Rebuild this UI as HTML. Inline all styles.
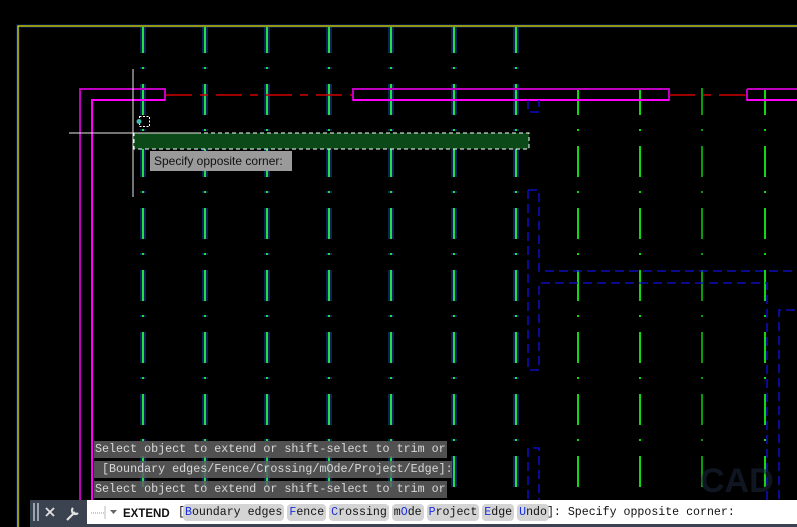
<!DOCTYPE html>
<html><head><meta charset="utf-8"><style>
html,body{margin:0;padding:0;background:#000;width:797px;height:527px;overflow:hidden;position:relative;font-family:"Liberation Sans",sans-serif}
svg{position:absolute;left:0;top:0}
.hist{position:absolute;left:94px;height:17px;background:rgba(95,95,95,0.85);color:#d8d8d8;font:11.7px/17px "Liberation Mono",monospace;white-space:pre;padding:0 1px}
#tip{position:absolute;left:150px;top:151px;width:142px;height:20px;background:#9a9a9a;color:#111;font-size:12px;line-height:20px;padding-left:4px;box-sizing:border-box}
#panel{position:absolute;left:30px;top:500px;width:57px;height:27px;background:#3b4350}
#inp{position:absolute;left:87px;top:500px;width:710px;height:24px;background:#fff}
#bot{position:absolute;left:30px;top:524px;width:767px;height:3px;background:#3b4350}
#cmd{position:absolute;left:178px;top:500px;height:24px;font:11.6px/25px "Liberation Mono",monospace;color:#111;white-space:pre}
.o{background:#d4d4d4;box-shadow:0 0 0 2px #d4d4d4;border-radius:2px}
.o b{color:#1a2ee0;font-weight:normal}
</style></head><body>
<svg width="797" height="527" viewBox="0 0 797 527">
<defs>
<clipPath id="c1"><rect x="0" y="27" width="797" height="500"/></clipPath>
<clipPath id="c2"><rect x="0" y="88" width="797" height="440"/></clipPath>
</defs>
<path d="M18 527V26H797" stroke="#0a2060" stroke-width="4" fill="none" opacity="0.6"/>
<path d="M18 527V26H797" stroke="#e6e600" stroke-width="1.3" fill="none"/>
<g clip-path="url(#c1)" stroke-dasharray="31 14 2 15">
<g stroke="#0d2a70" stroke-width="6" opacity="0.8">
<path d="M143 22V500M205 22V500M267 22V500M329 22V500M391 22V500M454 22V500M516 22V500"/>
</g>
<g stroke="#22e040" stroke-width="2">
<path d="M143 22V500M205 22V500M267 22V500M329 22V500M391 22V500M454 22V500M516 22V500"/>
</g>
</g>
<g clip-path="url(#c2)" stroke-dasharray="31 14 2 15" stroke-width="2">
<path d="M578 22V500M640 22V500M765 22V500" stroke="#12d812"/>
<path d="M702 22V500" stroke="#0a9a0a"/>
</g>
<g fill="none" stroke-width="2">
<path d="M80 527V89H165V100H92V527" stroke="#c000c0"/>
<path d="M92 527V100H165" stroke="#ff00ff"/>
<path d="M353 89H669V100H353Z" stroke="#c000c0"/>
<path d="M353 100H669" stroke="#ff00ff"/>
<path d="M747 89H797M747 89V100H797" stroke="#c000c0"/>
<path d="M747 100H797" stroke="#ff00ff"/>
</g>
<path d="M166 95H352M669 95H747" stroke="#d00000" stroke-width="1.5" stroke-dasharray="26 8 8 8"/>
<g fill="none" stroke="#1010e0" stroke-width="1.3" stroke-dasharray="9 5">
<path d="M528 100V112H539V100"/>
<path d="M528 190H539V271H797M528 190V370H539V283H767V527M779 527V310H797"/>
<path d="M528 527V448H539V527"/>
</g>
<rect x="134" y="133" width="395" height="16" fill="#0b4a18" stroke="#fff" stroke-dasharray="4 3"/>
<path d="M133 69V197M69 133H200" stroke="#e8e8e8" stroke-width="1"/>
<rect x="139.5" y="116.5" width="10" height="10" fill="none" stroke="#fff" stroke-dasharray="2 1.5"/>
<circle cx="139" cy="121.5" r="2.5" fill="#3fb8b0"/>
<text x="700" y="492" font-family="Liberation Sans" font-weight="bold" font-size="34" fill="#1a2538" opacity="0.6">CAD</text>
<text x="700" y="506" font-family="Liberation Sans" font-weight="bold" font-size="7" fill="#6a2c30" opacity="0.6">MASTER COACH</text>
</svg>
<div id="tip">Specify opposite corner:</div>
<div class="hist" style="top:441px;width:351px">Select object to extend or shift-select to trim or</div>
<div class="hist" style="top:461px;width:356px"> [Boundary edges/Fence/Crossing/mOde/Project/Edge]:</div>
<div class="hist" style="top:481px;width:351px">Select object to extend or shift-select to trim or</div>
<div id="panel"></div>
<div id="inp"></div>
<div id="bot"></div>
<svg width="797" height="527" viewBox="0 0 797 527" style="pointer-events:none">
<g fill="#9aa3b0"><rect x="33" y="503" width="2" height="18"/><rect x="37" y="503" width="2" height="18"/></g>
<path d="M46 508L54 516M54 508L46 516" stroke="#e0e0e0" stroke-width="1.8"/>
<path d="M67 520L75 512M73 508a3.5 3.5 0 1 0 5 5" stroke="#e0e0e0" stroke-width="2.2" fill="none"/>
<path d="M91 513H104" stroke="#6aa0e0" stroke-dasharray="1 1"/>
<path d="M105 506V519" stroke="#bbb"/>
<path d="M110 510H117L113.5 514Z" fill="#666"/>
<text x="123" y="517" font-family="Liberation Sans" font-weight="bold" font-size="11.5" fill="#111">EXTEND</text>
</svg>
<div id="cmd">[<span class="o"><b>B</b>oundary edges</span> <span class="o"><b>F</b>ence</span> <span class="o"><b>C</b>rossing</span> <span class="o">m<b>O</b>de</span> <span class="o"><b>P</b>roject</span> <span class="o"><b>E</b>dge</span> <span class="o"><b>U</b>ndo</span>]: Specify opposite corner:</div>
</body></html>
